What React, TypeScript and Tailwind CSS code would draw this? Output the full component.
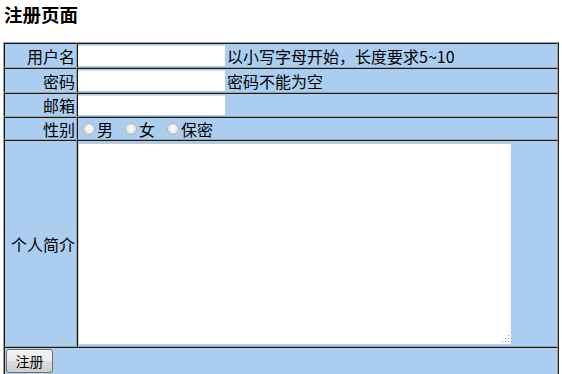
import React from "react";

const font = { fontFamily: '"Noto Sans CJK SC", "Noto Sans", sans-serif' };

function Radio({ label, first }: { label: string; first?: boolean }) {
  return (
    <span className={`flex items-center ${first ? "ml-[5px]" : "ml-[12px]"}`}>
      <span className="w-[12px] h-[12px] rounded-full border border-[#b4b4b4] bg-[radial-gradient(circle_at_50%_45%,#ffffff_0%,#f0f0f0_40%,#d4d4d4_100%)]" />
      <span className="ml-[2px]">{label}</span>
    </span>
  );
}

const cellBase =
  "border-t border-l border-t-[#1a1a1a] border-l-[#1a1a1a] border-b border-r border-b-[#a0a0a0] border-r-[#a0a0a0] p-[1px]";

function Row({
  label,
  h,
  children,
}: {
  label: string;
  h: string;
  children?: React.ReactNode;
}) {
  return (
    <div className={`flex ${h}`}>
      <div className={`${cellBase} w-[73px] flex items-center justify-end pr-[1px]`}>
        <span>{label}</span>
      </div>
      <div className={`${cellBase} flex-1 flex items-center pl-0`}>{children}</div>
    </div>
  );
}

export default function App() {
  return (
    <div className="w-[562px] h-[374px] bg-white text-black overflow-hidden text-[16px] leading-[20px]" style={font}>
      <div className="h-[42px] pl-[4px] pt-[2px] text-[18.5px] font-bold leading-[24px]">注册页面</div>
      <div className="ml-[3px] w-[556px] border border-t-[#a0a0a0] border-l-[#a0a0a0] border-b-[#1a1a1a] border-r-[#1a1a1a] bg-[#abcdef]">
        <Row label="用户名" h="h-[25px]">
          <div className="w-[147px] h-[21px] bg-white border-t border-t-[#dcdcdc]" />
          <span className="ml-[2px]">以小写字母开始，长度要求5~10</span>
        </Row>
        <Row label="密码" h="h-[25px]">
          <div className="w-[147px] h-[21px] bg-white border-t border-t-[#dcdcdc]" />
          <span className="ml-[2px]">密码不能为空</span>
        </Row>
        <Row label="邮箱" h="h-[24px]">
          <div className="w-[147px] h-[20px] bg-white border-t border-t-[#dcdcdc]" />
        </Row>
        <Row label="性别" h="h-[23px]">
          <Radio label="男" first />
          <Radio label="女" />
          <Radio label="保密" />
        </Row>
        <Row label="个人简介" h="h-[207px]">
          <div className="relative w-[433px] h-[201px] bg-white border-t border-l border-t-[#c8c8c8] border-l-[#c8c8c8]">
            <svg className="absolute right-[1px] bottom-[1px]" width="9" height="9" viewBox="0 0 9 9">
              <rect x="7" y="1" width="1" height="1" fill="#8a8a8a" />
              <rect x="7" y="4" width="1" height="1" fill="#8a8a8a" />
              <rect x="4" y="4" width="1" height="1" fill="#8a8a8a" />
              <rect x="7" y="7" width="1" height="1" fill="#8a8a8a" />
              <rect x="4" y="7" width="1" height="1" fill="#8a8a8a" />
              <rect x="1" y="7" width="1" height="1" fill="#8a8a8a" />
            </svg>
          </div>
        </Row>
        <div className={`${cellBase} h-[30px] flex items-start`}>
          <button className="w-[47px] h-[24px] rounded-[3px] border border-[#707070] bg-[linear-gradient(#f2f2f2_0%,#ebebeb_50%,#dddddd_51%,#cfcfcf_100%)] text-[14px] leading-[20px] text-black">
            注册
          </button>
        </div>
      </div>
    </div>
  );
}
